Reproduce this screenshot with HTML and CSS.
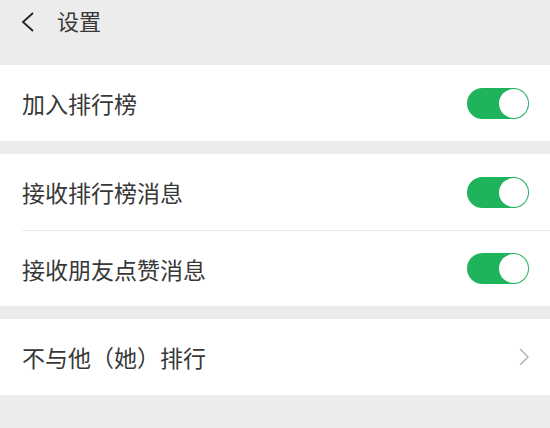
FILE: index.html
```html
<!DOCTYPE html>
<html lang="zh-CN">

<head>
    <meta charset="UTF-8">
    <meta name="viewport" content="width=device-width, initial-scale=1.0">
    <link rel="stylesheet" href="styles.css">
</head>

<body>
    <div class="header">
        <svg class="back" width="14" height="20" viewBox="0 0 14 20">
            <path d="M12 1 L2 10 L12 19" fill="none" stroke="#222" stroke-width="1.8"/>
        </svg>
        <span class="title">设置</span>
    </div>

    <div class="group">
        <div class="row">
            <span class="label">加入排行榜</span>
            <div class="switch"><div class="knob"></div></div>
        </div>
    </div>

    <div class="group">
        <div class="row">
            <span class="label">接收排行榜消息</span>
            <div class="switch"><div class="knob"></div></div>
        </div>
        <div class="row">
            <span class="label">接收朋友点赞消息</span>
            <div class="switch"><div class="knob"></div></div>
        </div>
    </div>

    <div class="group">
        <div class="row">
            <span class="label">不与他（她）排行</span>
            <svg class="arrow" width="10" height="18" viewBox="0 0 10 18">
                <path d="M1 1 L9 9 L1 17" fill="none" stroke="#b2b2b2" stroke-width="1.5"/>
            </svg>
        </div>
    </div>
</body>

</html>
```

FILE: styles.css
```css
body {
    margin: 0;
    background-color: #ececec;
    font-family: "Noto Sans CJK SC", "Noto Sans", sans-serif;
    color: #383838;
}

.header {
    height: 65px;
    display: flex;
    align-items: flex-start;
    padding-left: 21px;
    box-sizing: border-box;
}

.back {
    margin-top: 12px;
}

.title {
    margin-left: 22px;
    margin-top: 5px;
    font-size: 22px;
    line-height: 30px;
    color: #383838;
}

.group {
    background-color: #fff;
    padding-left: 22px;
    margin-bottom: 13px;
}

.row {
    height: 76px;
    display: flex;
    align-items: center;
    justify-content: space-between;
    padding-right: 21px;
    box-sizing: border-box;
}

.row + .row {
    border-top: 1px solid #ececec;
}

.label {
    font-size: 23px;
    color: #383838;
}

.switch {
    width: 62px;
    height: 31px;
    border-radius: 16px;
    background-color: #1fb35b;
    display: flex;
    justify-content: flex-end;
    align-items: center;
    padding: 1px;
    box-sizing: border-box;
}

.knob {
    width: 29px;
    height: 29px;
    border-radius: 50%;
    background-color: #fff;
}
```
